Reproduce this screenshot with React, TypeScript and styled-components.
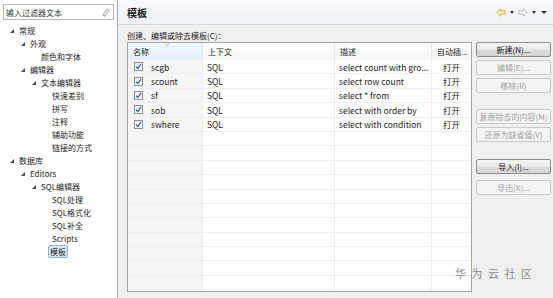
import styled, { createGlobalStyle } from 'styled-components';

const GlobalStyle = createGlobalStyle`
  html, body {
    margin: 0;
    padding: 0;
    background: #f0f0f0;
  }
  body {
    font-family: 'Noto Sans CJK SC', 'Noto Sans', sans-serif;
    color: #1e1e1e;
  }
`;

type TreeItem = {
  label: string;
  level: number;
  open?: boolean;
  selected?: boolean;
};

const tree: TreeItem[] = [
  { label: '常规', level: 0, open: true },
  { label: '外观', level: 1, open: true },
  { label: '颜色和字体', level: 2 },
  { label: '编辑器', level: 1, open: true },
  { label: '文本编辑器', level: 2, open: true },
  { label: '快速差别', level: 3 },
  { label: '拼写', level: 3 },
  { label: '注释', level: 3 },
  { label: '辅助功能', level: 3 },
  { label: '链接的方式', level: 3 },
  { label: '数据库', level: 0, open: true },
  { label: 'Editors', level: 1, open: true },
  { label: 'SQL编辑器', level: 2, open: true },
  { label: 'SQL处理', level: 3 },
  { label: 'SQL格式化', level: 3 },
  { label: 'SQL补全', level: 3 },
  { label: 'Scripts', level: 3 },
  { label: '模板', level: 3, selected: true },
];

const templates = [
  { name: 'scgb', context: 'SQL', desc: 'select count with gro...', auto: '打开' },
  { name: 'scount', context: 'SQL', desc: 'select row count', auto: '打开' },
  { name: 'sf', context: 'SQL', desc: 'select * from', auto: '打开' },
  { name: 'sob', context: 'SQL', desc: 'select with order by', auto: '打开' },
  { name: 'swhere', context: 'SQL', desc: 'select with condition', auto: '打开' },
];

const buttons = [
  { label: '新建(N)...', enabled: true, gap: 0 },
  { label: '编辑(E)...', enabled: false, gap: 3 },
  { label: '移除(R)', enabled: false, gap: 3 },
  { label: '复原除去的内容(M)', enabled: false, gap: 16 },
  { label: '还原为缺省值(V)', enabled: false, gap: 3 },
  { label: '导入(I)...', enabled: true, gap: 17 },
  { label: '导出(X)...', enabled: false, gap: 6 },
];

const EMPTY_ROWS = 12;

const App = () => {
  return (
    <>
      <GlobalStyle />
      <Window>
        <Sidebar>
          <FilterBox>
            <FilterText>输入过滤器文本</FilterText>
            <svg width='8' height='9' viewBox='0 0 8 9'>
              <path d='M5 0.8 L7.2 2.2 L3 8.2 L0.8 6.8 Z' fill='#e6e6e6' stroke='#a8a8a8' strokeWidth='0.8' />
              <path d='M0.8 6.8 L3 8.2' stroke='#8a8a8a' strokeWidth='1' />
            </svg>
          </FilterBox>
          <Tree>
            {tree.map(item => (
              <TreeRow key={item.label} level={item.level}>
                <Twisty>
                  {item.open && (
                    <svg width='4' height='4' viewBox='0 0 4 4'>
                      <polygon points='4,0 4,4 0,4' fill='#4a4a4a' />
                    </svg>
                  )}
                </Twisty>
                <TreeLabel selected={!!item.selected}>{item.label}</TreeLabel>
              </TreeRow>
            ))}
          </Tree>
        </Sidebar>

        <Main>
          <HeaderBand>
            <Title>模板</Title>
            <NavIcons>
              <svg width='10' height='9' viewBox='0 0 10 9'>
                <path d='M0.8 4.5 L4.5 0.8 L4.5 2.8 L9.2 2.8 L9.2 6.2 L4.5 6.2 L4.5 8.2 Z' fill='#fdf3c4' stroke='#d9a520' strokeWidth='0.9' strokeLinejoin='round' />
              </svg>
              <DropArrow />
              <svg width='10' height='9' viewBox='0 0 10 9'>
                <path d='M9.2 4.5 L5.5 0.8 L5.5 2.8 L0.8 2.8 L0.8 6.2 L5.5 6.2 L5.5 8.2 Z' fill='#f4f4f4' stroke='#b9b9b9' strokeWidth='0.9' strokeLinejoin='round' />
              </svg>
              <DropArrow />
              <DropArrow wide />
            </NavIcons>
          </HeaderBand>

          <Caption>创建、编辑或除去模板(C)：</Caption>

          <Body>
            <Table>
              <HeaderRow>
                <HeadCell sorted>
                  名称
                  <SortMark>
                    <svg width='5' height='3' viewBox='0 0 5 3'>
                      <path d='M0.5 0.5 L2.5 2.5 L4.5 0.5' fill='none' stroke='#9aa5b5' strokeWidth='0.8' />
                    </svg>
                  </SortMark>
                </HeadCell>
                <HeadCell>上下文</HeadCell>
                <HeadCell>描述</HeadCell>
                <HeadCell>自动插...</HeadCell>
              </HeaderRow>
              {templates.map(t => (
                <Row key={t.name}>
                  <NameCell>
                    <CheckBox>
                      <svg width='7' height='7' viewBox='0 0 7 7'>
                        <path d='M1 3.6 L2.8 5.6 L6 1' fill='none' stroke='#2c56a8' strokeWidth='1.2' />
                      </svg>
                    </CheckBox>
                    {t.name}
                  </NameCell>
                  <Cell>{t.context}</Cell>
                  <Cell>{t.desc}</Cell>
                  <Cell center>{t.auto}</Cell>
                </Row>
              ))}
              {Array.from({ length: EMPTY_ROWS }).map((_, i) => (
                <Row key={`empty-${i}`}>
                  <NameCell />
                  <Cell />
                  <Cell />
                  <Cell />
                </Row>
              ))}
            </Table>

            <ButtonColumn>
              {buttons.map(b => (
                <Button key={b.label} enabled={b.enabled} gap={b.gap}>
                  {b.label}
                </Button>
              ))}
            </ButtonColumn>
          </Body>
        </Main>

        <Watermark>华 为 云 社 区</Watermark>
      </Window>
    </>
  );
};

const Window = styled.div`
  position: relative;
  display: flex;
  width: 553px;
  height: 298px;
  overflow: hidden;
  background: #f0f0f0;
  font-size: 8px;
`;

const Sidebar = styled.div`
  width: 118px;
  flex: 0 0 auto;
  background: #ffffff;
  border-right: 1px solid #a9a9a9;
  padding: 4px 0 0 3px;
  box-sizing: border-box;
`;

const FilterBox = styled.div`
  display: flex;
  align-items: center;
  justify-content: space-between;
  width: 111px;
  height: 16px;
  box-sizing: border-box;
  border: 1px solid #b5b9c0;
  padding: 0 3px 0 2px;
  background: #fff;
`;

const FilterText = styled.span`
  font-size: 8px;
  color: #333;
`;

const Tree = styled.div`
  margin-top: 4px;
  margin-left: -3px;
`;

const TreeRow = styled.div<{ level: number }>`
  display: flex;
  align-items: center;
  height: 13px;
  padding-left: ${({ level }) => 10 + level * 11}px;
`;

const Twisty = styled.span`
  display: flex;
  align-items: center;
  width: 7px;
  flex: 0 0 auto;
`;

const TreeLabel = styled.span<{ selected: boolean }>`
  font-size: 8px;
  line-height: 11px;
  color: #1e1e1e;
  padding: 0 1px;
  margin-left: ${({ selected }) => (selected ? '-2px' : '0')};
  border: 1px solid ${({ selected }) => (selected ? '#8fb4e0' : 'transparent')};
  border-radius: 2px;
  background: ${({ selected }) => (selected ? '#dbe9fb' : 'transparent')};
`;

const Main = styled.div`
  flex: 1;
  display: flex;
  flex-direction: column;
  min-width: 0;
`;

const HeaderBand = styled.div`
  display: flex;
  align-items: center;
  justify-content: space-between;
  height: 24px;
  padding: 0 6px 0 9px;
  background: linear-gradient(#f9fafc, #eef1f5);
  border-bottom: 1px solid #d3d9e0;
`;

const Title = styled.span`
  font-size: 10px;
  font-weight: 700;
  color: #1a1a1a;
`;

const NavIcons = styled.div`
  display: flex;
  align-items: center;
  gap: 4px;
`;

const DropArrow = styled.span<{ wide?: boolean }>`
  width: 0;
  height: 0;
  border-left: ${({ wide }) => (wide ? 3.5 : 2.5)}px solid transparent;
  border-right: ${({ wide }) => (wide ? 3.5 : 2.5)}px solid transparent;
  border-top: ${({ wide }) => (wide ? 3.5 : 3)}px solid #333;
  margin-left: ${({ wide }) => (wide ? 1 : 0)}px;
`;

const Caption = styled.div`
  font-size: 8px;
  line-height: 11px;
  margin: 5px 0 1px 9px;
  color: #222;
`;

const Body = styled.div`
  display: flex;
  align-items: flex-start;
  gap: 4px;
  padding-left: 9px;
`;

const Table = styled.div`
  width: 345px;
  height: 250px;
  flex: 0 0 auto;
  box-sizing: border-box;
  border: 1px solid #a3a3a3;
  background: #fff;
  overflow: hidden;
`;

const HeaderRow = styled.div`
  display: grid;
  grid-template-columns: 75px 132px 97px 1fr;
  height: 17px;
`;

const HeadCell = styled.div<{ sorted?: boolean }>`
  position: relative;
  display: flex;
  align-items: center;
  padding-left: 5px;
  font-size: 8px;
  color: #222;
  border-right: 1px solid #e3e6ea;
  background: ${({ sorted }) =>
    sorted ? 'linear-gradient(#f2f6fb, #e6eef8)' : 'linear-gradient(#ffffff, #f5f6f7)'};
  &:last-child {
    border-right: none;
  }
`;

const SortMark = styled.span`
  position: absolute;
  top: 0;
  left: 37px;
  line-height: 0;
`;

const Row = styled.div`
  display: grid;
  grid-template-columns: 75px 132px 97px 1fr;
  height: 14.4px;
  box-sizing: border-box;
  border-bottom: 1px solid #efefef;
`;

const Cell = styled.div<{ center?: boolean }>`
  display: flex;
  align-items: center;
  justify-content: ${({ center }) => (center ? 'center' : 'flex-start')};
  padding-left: ${({ center }) => (center ? 0 : 4)}px;
  font-size: 8.5px;
  color: #222;
  border-right: 1px solid #ececec;
  white-space: nowrap;
  overflow: hidden;
  &:last-child {
    border-right: none;
  }
`;

const NameCell = styled(Cell)`
  background: #f6f6f6;
  padding-left: 6px;
  gap: 8px;
`;

const CheckBox = styled.span`
  display: flex;
  align-items: center;
  justify-content: center;
  width: 9px;
  height: 9px;
  box-sizing: border-box;
  border: 1px solid #8e8f8f;
  background: linear-gradient(#eeeeee, #ffffff);
`;

const ButtonColumn = styled.div`
  display: flex;
  flex-direction: column;
  width: 75px;
`;

const Button = styled.div<{ enabled: boolean; gap: number }>`
  display: flex;
  align-items: center;
  justify-content: center;
  height: 15px;
  box-sizing: border-box;
  margin-top: ${({ gap }) => gap}px;
  border: 1px solid ${({ enabled }) => (enabled ? '#8d8d8d' : '#c9c9c9')};
  border-radius: 2px;
  font-size: 8px;
  color: ${({ enabled }) => (enabled ? '#1a1a1a' : '#a3a3a3')};
  background: ${({ enabled }) =>
    enabled ? 'linear-gradient(#f6f6f6 0%, #e9e9e9 50%, #dcdcdc 51%, #d4d4d4 100%)' : '#f4f4f4'};
`;

const Watermark = styled.div`
  position: absolute;
  left: 455px;
  bottom: 17px;
  font-size: 11px;
  letter-spacing: 1.5px;
  color: #8c8c8c;
  white-space: nowrap;
`;

export default App;
